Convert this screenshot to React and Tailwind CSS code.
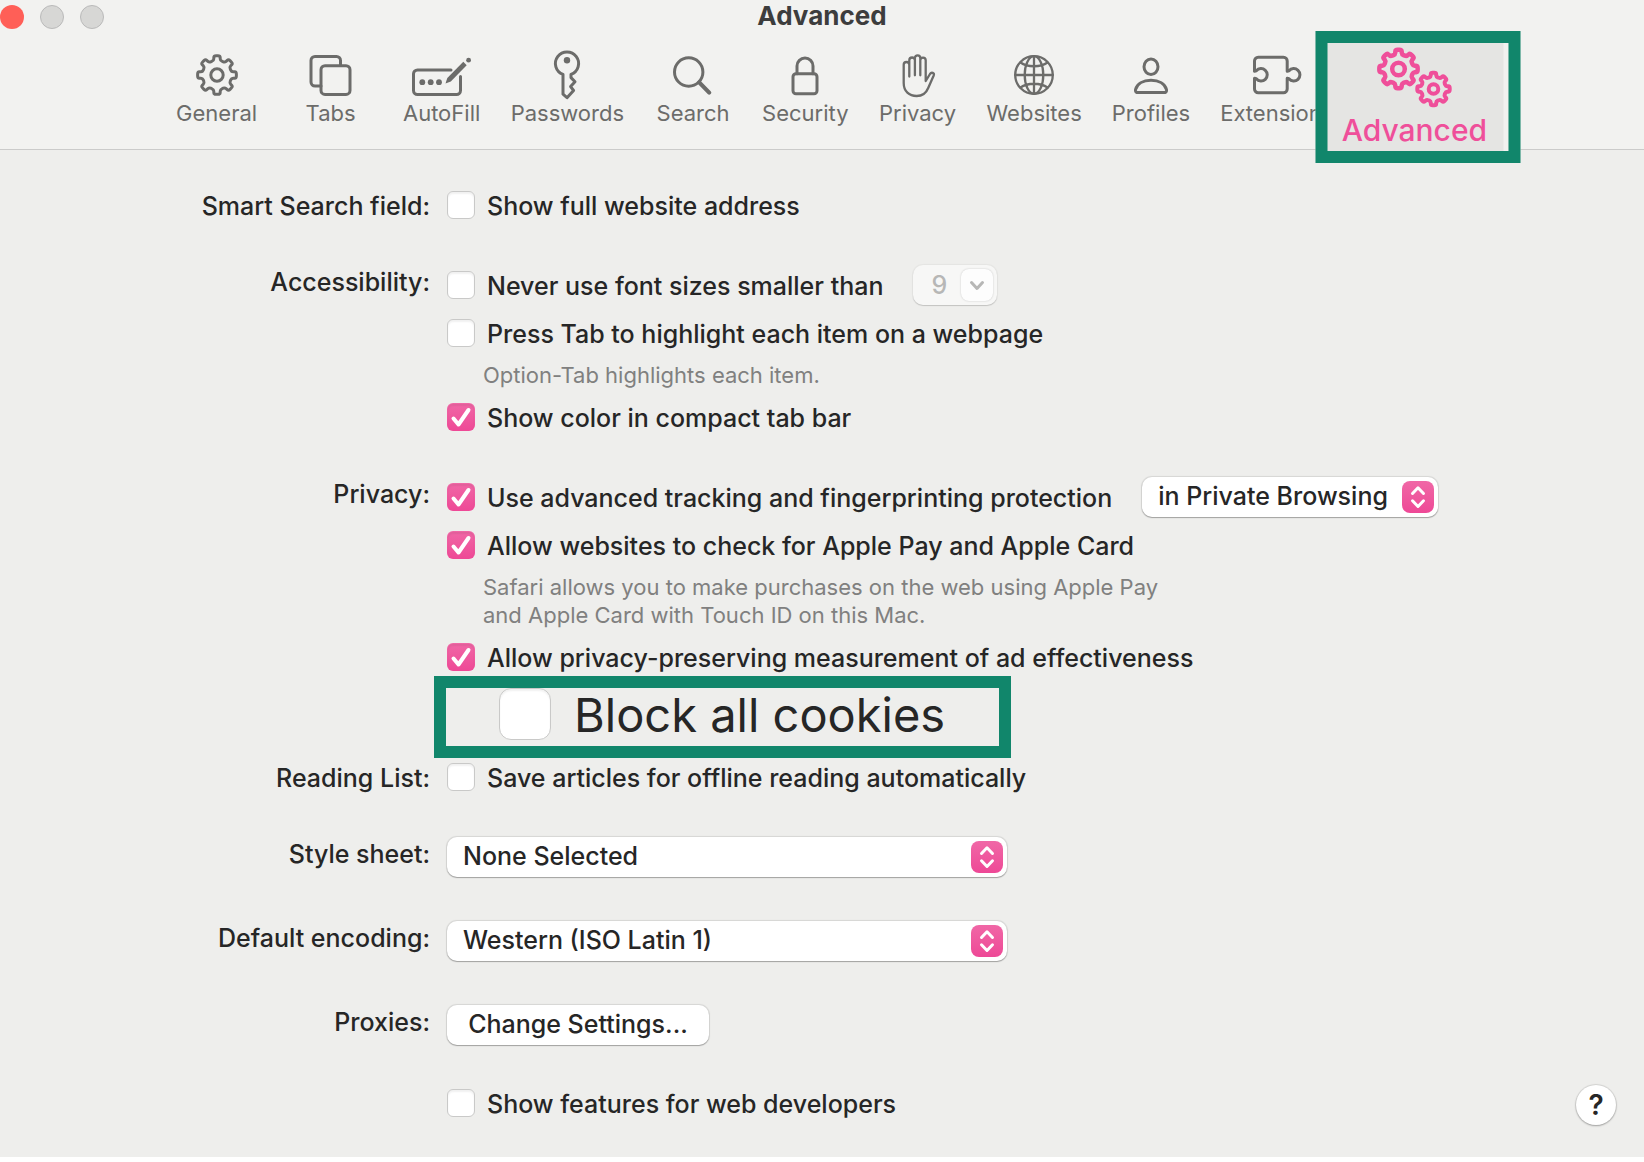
import React, { useState } from "react";

// Closed outline of a cog wheel, first tooth pointing up
const gearPath = (cx, cy, outer, inner, teeth) => {
  const pts = [];
  const step = 360 / teeth;
  for (let i = 0; i < teeth; i++) {
    [
      [-13, inner],
      [-9, outer],
      [9, outer],
      [13, inner],
    ].forEach(([offset, r]) => {
      const a = ((i * step + offset * (8 / teeth) - 90) * Math.PI) / 180;
      pts.push([cx + r * Math.cos(a), cy + r * Math.sin(a)]);
    });
  }
  const mix = (a, b, t) => [a[0] + (b[0] - a[0]) * t, a[1] + (b[1] - a[1]) * t];
  const fmt = (p) => `${p[0].toFixed(2)} ${p[1].toFixed(2)}`;
  return (
    pts
      .map((p, i) => {
        const prev = pts[(i + pts.length - 1) % pts.length];
        const next = pts[(i + 1) % pts.length];
        const start = fmt(mix(p, prev, 0.35));
        const end = fmt(mix(p, next, 0.35));
        return `${i === 0 ? "M" : "L"}${start} Q${fmt(p)} ${end}`;
      })
      .join(" ") + " Z"
  );
};

const ICONS = {
  general: (
    <>
      <path d={gearPath(30, 25, 19.6, 14.8, 8)} />
      <circle cx="30" cy="25" r="6.2" />
    </>
  ),
  tabs: (
    <>
      <path d="M20 36h-6a4 4 0 0 1-4-4V10.500a4 4 0 0 1 4-4h21.500a4 4 0 0 1 4 4v5" />
      <rect x="20" y="15.700" width="29" height="28.700" rx="4" />
    </>
  ),
  autofill: (
    <>
      <path d="M39 20H5.500a4 4 0 0 0-4 4v16.500a4 4 0 0 0 4 4h39a4 4 0 0 0 4-4V26.500" />
      <g fill="currentColor" stroke="none">
        <circle cx="10.300" cy="32.200" r="2.900" />
        <circle cx="18.700" cy="32.200" r="2.900" />
        <circle cx="27" cy="32.200" r="2.900" />
        <path d="M33.500 33.500l1.800-5.600L51.300 11.800l3.400 3.400L38.800 31.500z" />
        <circle cx="56.600" cy="10.200" r="2.400" />
      </g>
    </>
  ),
  passwords: (
    <>
      <path d="M26 24.400a11.600 11.600 0 1 1 8 0v3.200l4 4.200-4.400 4.800 3 3.900-6.600 7.200-4-3.500z" />
      <circle cx="30" cy="10.300" r="3.200" fill="currentColor" stroke="none" />
    </>
  ),
  search: (
    <>
      <circle cx="25.700" cy="22" r="14.200" />
      <path d="M36.200 32.400L46.200 42.600" strokeWidth="4.200" />
    </>
  ),
  security: (
    <>
      <rect x="18" y="23.700" width="24" height="20" rx="3" />
      <path d="M22 23.700V16a8 8 0 0 1 16 0v7.700" />
    </>
  ),
  privacy: (
    <path
      strokeWidth="2.300"
      d="M21.300 26.500V14.800a2.800 2.800 0 0 0-5.600 0V33c0 8.500 5.500 13 13 13 6.500 0 9.500-3 11.500-8l5.500-12.500c1-2.600-2.200-3.800-3.700-1.500L37.700 31V10.300a2.700 2.700 0 0 0-5.400 0M32.300 25.300V8a2.700 2.700 0 0 0-5.400 0v17.300M26.900 10.300a2.800 2.800 0 0 0-5.600 0v5"
    />
  ),
  websites: (
    <g strokeWidth="2.300">
      <circle cx="30" cy="25" r="18.800" />
      <ellipse cx="30" cy="25" rx="9.300" ry="18.800" />
      <path d="M30 6.200v37.600M11.200 25h37.600M16.500 12.500c7 5 20 5 27 0M16.500 37.500c7-5 20-5 27 0" />
    </g>
  ),
  profiles: (
    <>
      <ellipse cx="30" cy="16.700" rx="7" ry="7.800" />
      <path d="M17.500 42.600h25c2.500 0 3.500-1 3-3-1.600-5.600-7.500-9.300-15.500-9.300s-13.900 3.700-15.500 9.300c-.500 2 .500 3 3 3z" />
    </>
  ),
  extensions: (
    <path d="M7.500 21.300V11a3.700 3.700 0 0 1 3.700-3.700h25.300A3.700 3.700 0 0 1 40.200 11v10.300l1.800-.500a6.200 6.200 0 1 1 0 8l-1.800-.500V39a3.700 3.700 0 0 1-3.700 3.700H11.200A3.700 3.700 0 0 1 7.500 39V28.300l1.800.500a6.200 6.200 0 1 0 0-8z" />
  ),
};

const TABS = [
  { id: "general", label: "General", width: "min-w-[84px]" },
  { id: "tabs", label: "Tabs", width: "min-w-[84px]" },
  { id: "autofill", label: "AutoFill" },
  { id: "passwords", label: "Passwords" },
  { id: "search", label: "Search" },
  { id: "security", label: "Security" },
  { id: "privacy", label: "Privacy" },
  { id: "websites", label: "Websites" },
  { id: "profiles", label: "Profiles" },
  { id: "extensions", label: "Extensions" },
];

const ToolbarButton = ({ id, label, width = "min-w-[78px]" }) => (
  <button
    type="button"
    className={`flex shrink-0 flex-col items-center text-[22px] leading-[26px] text-[#6c6c6a] ${width}`}
  >
    <svg
      viewBox="0 0 60 50"
      className="h-[50px] w-[60px] overflow-visible"
      fill="none"
      stroke="currentColor"
      strokeWidth="3"
      strokeLinecap="round"
      strokeLinejoin="round"
      aria-hidden="true"
    >
      {ICONS[id]}
    </svg>
    {label}
  </button>
);

const AdvancedButton = () => (
  <div className="relative ml-1 w-[102px] shrink-0">
    <button
      type="button"
      className="absolute -top-[19px] left-1/2 z-10 flex h-[132px] w-[205px] -translate-x-1/2 flex-col items-center border-[12px] border-[#11866b] bg-[#e5e5e3] pr-2 text-[30px] leading-[34px] font-medium text-[#ef4f9a] shadow-[inset_-5px_0_0_#f1f1ef]"
    >
      <svg
        viewBox="0 0 80 70"
        className="h-[70px] w-[80px] shrink-0"
        fill="none"
        stroke="currentColor"
        strokeWidth="4.500"
        strokeLinejoin="round"
        aria-hidden="true"
      >
        <path d={gearPath(24, 26, 19.4, 15, 8)} />
        <circle cx="24" cy="26" r="6.300" />
        <path d={gearPath(59, 46, 16.400, 12.600, 8)} strokeWidth="4" />
        <circle cx="59" cy="46" r="4.800" strokeWidth="4" />
      </svg>
      Advanced
    </button>
  </div>
);

const Checkbox = ({ label, defaultChecked = false, large = false }) => {
  const [checked, setChecked] = useState(defaultChecked);
  return (
    <label
      className={
        large
          ? "flex items-center gap-[23px] text-[47px] leading-none font-normal"
          : "flex h-8 items-center gap-3"
      }
    >
      <span className={large ? "relative size-[52px]" : "relative size-7"}>
        <input
          type="checkbox"
          checked={checked}
          onChange={(e) => setChecked(e.target.checked)}
          className={`block size-full appearance-none border border-[#c9c9c8] bg-white shadow-[inset_0_2px_2px_#0000000f] checked:border-transparent checked:bg-linear-to-b checked:from-[#f067a6] checked:to-[#ee4896] checked:bg-origin-border ${
            large ? "rounded-xl" : "rounded-md"
          }`}
        />
        {checked && (
          <svg
            viewBox="0 0 28 28"
            className="pointer-events-none absolute inset-0"
            fill="none"
            stroke="white"
            strokeWidth="4"
            strokeLinecap="round"
            strokeLinejoin="round"
            aria-hidden="true"
          >
            <path d="M6.500 15.500l5 6L21.500 7" />
          </svg>
        )}
      </span>
      <span className={large ? "" : "pt-0.5"}>{label}</span>
    </label>
  );
};

const Dropdown = ({ id, label, options, className }) => (
  <div className={`relative h-10 ${className}`}>
    <select
      id={id}
      aria-label={label}
      className="h-10 w-full appearance-none rounded-[10px] bg-white pb-0.5 pl-4 shadow-[0_0_1px_1px_#0000001a,0_1px_1px_#00000040]"
    >
      {options.map((o) => (
        <option key={o}>{o}</option>
      ))}
    </select>
    <span className="pointer-events-none absolute top-1 right-1 flex size-8 items-center justify-center rounded-lg bg-linear-to-b from-[#f067a6] to-[#ee4896]">
      <svg
        viewBox="0 0 32 32"
        className="size-8"
        fill="none"
        stroke="white"
        strokeWidth="3"
        strokeLinecap="round"
        strokeLinejoin="round"
        aria-hidden="true"
      >
        <path d="M10.500 12.500L16 6.800l5.500 5.700M10.500 19.800l5.500 5.700 5.500-5.700" />
      </svg>
    </span>
  </div>
);

const Section = ({ label, htmlFor, children }) => (
  <section className="grid grid-cols-[430px_1fr] gap-x-[17px]">
    {htmlFor ? (
      <label htmlFor={htmlFor} className="h-8 pt-px text-right">
        {label}
      </label>
    ) : (
      <span className="h-8 pt-px text-right">{label}</span>
    )}
    <div className="flex flex-col gap-3">{children}</div>
  </section>
);

const Note = ({ children }) => (
  <p className="pl-9 text-[22px] leading-7 font-normal text-[#80807f]">{children}</p>
);

const App = () => {
  return (
    <div className="min-h-screen overflow-x-hidden bg-white font-['Inter',sans-serif] text-[#262626]">
      <header className="relative h-[150px] border-b border-[#cbcbca] bg-[#f2f2f0]">
        <div className="absolute top-[5px] left-0 flex gap-4">
          <button type="button" aria-label="Close" className="size-6 rounded-full bg-[#ff5f57]" />
          <button type="button" aria-label="Minimize" className="size-6 rounded-full border border-[#bababa] bg-[#d7d7d5]" />
          <button type="button" aria-label="Zoom" className="size-6 rounded-full border border-[#bababa] bg-[#d7d7d5]" />
        </div>
        <h1 className="text-center text-[26px] leading-8 font-bold text-[#3d3d3d]">Advanced</h1>
        <nav className="mt-[18px] flex justify-center gap-[30px]">
          {TABS.map((tab) => (
            <ToolbarButton key={tab.id} {...tab} />
          ))}
          <AdvancedButton />
        </nav>
      </header>

      <main className="bg-[#eeeeec] pt-[39px] pb-8 text-[25px] leading-8 font-[450]">
        <div className="flex flex-col gap-11">
          <Section label="Smart Search field:">
            <Checkbox label="Show full website address" />
          </Section>

          <Section label="Accessibility:">
            <div className="flex h-10 items-center gap-[30px]">
              <Checkbox label="Never use font sizes smaller than" />
              <div className="relative h-10 w-[84px]">
                <select
                  disabled
                  aria-label="Minimum font size"
                  className="h-10 w-full appearance-none rounded-[10px] bg-[#f7f7f6] pl-[18px] text-[#b7b7b6] opacity-100 shadow-[0_0_1px_1px_#0000000a,0_1px_1px_#00000026]"
                >
                  <option>9</option>
                </select>
                <span className="pointer-events-none absolute top-1 right-1 size-8 rounded-lg bg-[#fdfdfd] shadow-[0_0_2px_#00000033]">
                  <svg
                    viewBox="0 0 32 32"
                    className="size-8"
                    fill="none"
                    stroke="#b7b7b6"
                    strokeWidth="3"
                    strokeLinecap="round"
                    strokeLinejoin="round"
                    aria-hidden="true"
                  >
                    <path d="M10.500 13.500l5.500 6 5.500-6" />
                  </svg>
                </span>
              </div>
            </div>
            <Checkbox label="Press Tab to highlight each item on a webpage" />
            <Note>Option-Tab highlights each item.</Note>
            <Checkbox label="Show color in compact tab bar" defaultChecked />
          </Section>

          <Section label="Privacy:">
            <div className="flex h-10 items-center gap-[30px]">
              <Checkbox label="Use advanced tracking and fingerprinting protection" defaultChecked />
              <Dropdown
                label="Tracking protection scope"
                options={["in Private Browsing", "in all browsing"]}
                className="w-[296px]"
              />
            </div>
            <Checkbox label="Allow websites to check for Apple Pay and Apple Card" defaultChecked />
            <Note>
              Safari allows you to make purchases on the web using Apple Pay
              <br />
              and Apple Card with Touch ID on this Mac.
            </Note>
            <Checkbox label="Allow privacy-preserving measurement of ad effectiveness" defaultChecked />
            {/* Enlarged callout, taller than the row it sits on */}
            <div className="relative h-8">
              <div className="absolute -top-[9px] -left-[13px] h-[82px] w-[577px] border-[12px] border-[#11866b] bg-[#eeeeec] pl-[53px]">
                <Checkbox label="Block all cookies" large />
              </div>
            </div>
          </Section>

          <Section label="Reading List:">
            <Checkbox label="Save articles for offline reading automatically" />
          </Section>

          <Section label="Style sheet:" htmlFor="style-sheet">
            <Dropdown id="style-sheet" options={["None Selected", "Other..."]} className="w-[560px]" />
          </Section>

          <Section label="Default encoding:" htmlFor="encoding">
            <Dropdown
              id="encoding"
              options={["Western (ISO Latin 1)", "Unicode (UTF-8)"]}
              className="w-[560px]"
            />
          </Section>

          <Section label="Proxies:">
            <button
              type="button"
              className="h-10 w-[262px] rounded-[10px] bg-white pb-0.5 shadow-[0_0_1px_1px_#0000001a,0_1px_1px_#00000040]"
            >
              Change Settings...
            </button>
          </Section>
        </div>

        <div className="mt-10 flex items-start justify-between pr-7 pl-[447px]">
          <div className="flex h-9 items-center">
            <Checkbox label="Show features for web developers" />
          </div>
          <button
            type="button"
            aria-label="Help"
            className="size-10 rounded-full bg-white text-[28px] font-semibold shadow-[0_0_1px_1px_#0000001a,0_1px_2px_#00000040]"
          >
            ?
          </button>
        </div>
      </main>
    </div>
  );
};

export default App;
